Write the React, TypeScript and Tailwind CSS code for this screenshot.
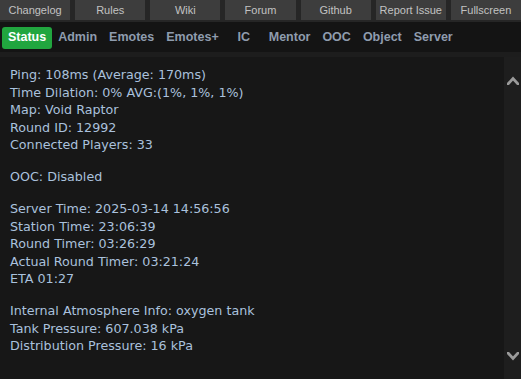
import React from "react";

// Top link buttons
const links = ["Changelog", "Rules", "Wiki", "Forum", "Github", "Report Issue", "Fullscreen"];

// Tabs of the panel
const tabs = ["Status", "Admin", "Emotes", "Emotes+", "IC", "Mentor", "OOC", "Object", "Server"];

// Status lines, grouped by blank gaps
const groups: string[][] = [
  [
    "Ping: 108ms (Average: 170ms)",
    "Time Dilation: 0% AVG:(1%, 1%, 1%)",
    "Map: Void Raptor",
    "Round ID: 12992",
    "Connected Players: 33",
  ],
  ["OOC: Disabled"],
  [
    "Server Time: 2025-03-14 14:56:56",
    "Station Time: 23:06:39",
    "Round Timer: 03:26:29",
    "Actual Round Timer: 03:21:24",
    "ETA 01:27",
  ],
  [
    "Internal Atmosphere Info: oxygen tank",
    "Tank Pressure: 607.038 kPa",
    "Distribution Pressure: 16 kPa",
  ],
];

const Chevron: React.FC<{ up?: boolean }> = ({ up }) => (
  <svg width="12" height="9" viewBox="0 0 12 9" className="block">
    <polyline
      points={up ? "1,8 6,2.5 11,8" : "1,1 6,6.5 11,1"}
      fill="none"
      stroke="#9a9a9a"
      strokeWidth="2.8"
      strokeLinecap="square"
      strokeLinejoin="miter"
    />
  </svg>
);

export default function App() {
  return (
    <div className="w-[521px] h-[379px] flex flex-col bg-[#171717] overflow-hidden">
      {/* Link bar */}
      <div className="h-[22px] bg-[#262626] grid grid-cols-7 gap-[5px] pb-[2px] shrink-0">
        {links.map((l) => (
          <button
            key={l}
            className="h-[20px] bg-[#3d3d3d] text-[#c2c2c2] text-[11px] leading-[20px] text-center font-['Liberation_Sans',Arial,sans-serif]"
          >
            {l}
          </button>
        ))}
      </div>

      {/* Tabs */}
      <div className="h-[30px] bg-[#141414] flex items-center pl-[2px] pt-[1px] shrink-0">
        {tabs.map((t, i) => (
          <div
            key={t}
            className={`h-[22px] min-w-[38px] px-[6px] flex items-center justify-center rounded-[3px] text-[12.5px] font-bold font-['Liberation_Sans',Arial,sans-serif] ${
              i === 0 ? "bg-[#21a63f] text-white" : "text-[#8f9cae]"
            }`}
          >
            {t}
          </div>
        ))}
      </div>

      {/* Separator */}
      <div className="h-[5px] bg-[#1d1d1d] shrink-0" />

      {/* Content + scrollbar */}
      <div className="flex-1 flex min-h-0">
        <div className="flex-1 pl-[10px] pt-[9px] text-[12.7px] leading-[17.5px] text-[#aac1dd] font-['DejaVu_Sans',Verdana,sans-serif]">
          {groups.map((g, gi) => (
            <div key={gi} className={gi > 0 ? "mt-[14.5px]" : ""}>
              {g.map((line) => (
                <div key={line} className="whitespace-nowrap">
                  {line}
                </div>
              ))}
            </div>
          ))}
        </div>
        <div className="w-[17px] bg-[#1e1e1e] flex flex-col items-center justify-between pt-[19px] pb-[18px]">
          <Chevron up />
          <Chevron />
        </div>
      </div>
    </div>
  );
}
